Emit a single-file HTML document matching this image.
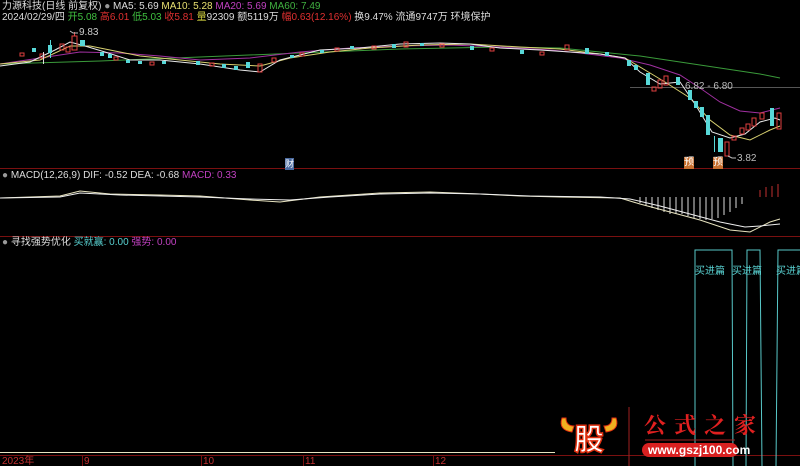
<!DOCTYPE html>
<html><head><meta charset="utf-8"><style>
html,body{margin:0;padding:0;background:#000;width:800px;height:466px;overflow:hidden}
body{position:relative;font-family:"Liberation Sans","Noto Sans CJK SC",sans-serif;font-size:10px;color:#ccc}
.t{position:absolute;white-space:nowrap;line-height:12px}
</style></head><body>
<svg width="800" height="466" style="position:absolute;left:0;top:0">
<line x1="0" y1="168.5" x2="800" y2="168.5" stroke="#7a1010"/>
<line x1="0" y1="236.5" x2="800" y2="236.5" stroke="#7a1010"/>
<line x1="0" y1="455.5" x2="800" y2="455.5" stroke="#7a1010"/>
<line x1="630" y1="87.5" x2="800" y2="87.5" stroke="#555"/>
<polyline fill="none" stroke="#3a9a3a" points="0,64 100,61 200,57 300,53 400,49 500,47 560,48 600,52 640,56 680,62 720,68 760,74 780,78"/>
<polyline fill="none" stroke="#a030a0" points="0,64 40,58 80,52 120,53 160,56 200,60 250,58 300,52 350,48 400,46 450,45 500,47 550,50 580,53 620,58 650,65 680,75 700,88 720,102 740,111 760,113 780,108"/>
<polyline fill="none" stroke="#d8d070" points="0,64 40,60 70,46 90,46 110,50 140,56 180,60 220,64 260,66 290,58 330,52 370,48 420,45 470,44 520,47 560,49 600,54 625,58 645,70 665,82 690,98 710,120 730,135 750,140 770,130 780,126"/>
<polyline fill="none" stroke="#e8e8e8" points="0,66 30,62 55,50 70,42 85,46 105,52 130,60 160,60 200,64 240,70 260,72 280,60 320,50 360,48 400,44 440,43 470,44 500,48 540,50 570,52 600,54 625,58 640,72 660,84 680,82 695,104 712,132 730,138 745,134 760,122 775,118 780,120"/>
<g>
<rect x="72" y="36" width="5" height="14" fill="none" stroke="#e04040"/>
<line x1="74.5" y1="32" x2="74.5" y2="36" stroke="#e04040"/>
<line x1="50.5" y1="40" x2="50.5" y2="58" stroke="#58d8d8"/>
<rect x="48" y="45" width="4" height="8" fill="#58d8d8"/>
<rect x="80" y="40" width="5" height="6" fill="#58d8d8"/>
<rect x="60" y="44" width="4" height="6" fill="none" stroke="#e04040"/>
<rect x="66" y="47" width="4" height="5" fill="none" stroke="#e04040"/>
<rect x="32" y="48" width="4" height="4" fill="#58d8d8"/>
<rect x="20" y="53" width="4" height="3" fill="none" stroke="#e04040"/>
<rect x="40" y="54" width="4" height="4" fill="none" stroke="#e04040"/>
<line x1="43.5" y1="52" x2="43.5" y2="64" stroke="#ddd"/>
<rect x="100" y="52" width="4" height="4" fill="#58d8d8"/>
<rect x="108" y="54" width="4" height="4" fill="#58d8d8"/>
<rect x="114" y="57" width="4" height="3" fill="none" stroke="#e04040"/>
<rect x="126" y="60" width="4" height="3" fill="#58d8d8"/>
<rect x="138" y="61" width="4" height="3" fill="#58d8d8"/>
<rect x="150" y="62" width="4" height="3" fill="none" stroke="#e04040"/>
<rect x="162" y="61" width="4" height="3" fill="#58d8d8"/>
<rect x="196" y="61" width="4" height="4" fill="#58d8d8"/>
<rect x="210" y="63" width="4" height="3" fill="none" stroke="#e04040"/>
<rect x="222" y="64" width="4" height="4" fill="#58d8d8"/>
<rect x="234" y="66" width="4" height="4" fill="#58d8d8"/>
<rect x="246" y="62" width="4" height="6" fill="#58d8d8"/>
<rect x="258" y="64" width="4" height="8" fill="none" stroke="#e04040"/>
<rect x="272" y="58" width="4" height="4" fill="none" stroke="#e04040"/>
<rect x="290" y="55" width="4" height="3" fill="#58d8d8"/>
<rect x="300" y="53" width="4" height="3" fill="none" stroke="#e04040"/>
<rect x="320" y="50" width="4" height="3" fill="#58d8d8"/>
<rect x="335" y="48" width="4" height="3" fill="none" stroke="#e04040"/>
<rect x="350" y="46" width="4" height="3" fill="#58d8d8"/>
<rect x="372" y="46" width="4" height="3" fill="none" stroke="#e04040"/>
<rect x="392" y="44" width="4" height="4" fill="#58d8d8"/>
<rect x="404" y="42" width="4" height="5" fill="none" stroke="#e04040"/>
<rect x="420" y="43" width="4" height="3" fill="#58d8d8"/>
<rect x="440" y="44" width="4" height="3" fill="none" stroke="#e04040"/>
<rect x="470" y="46" width="4" height="4" fill="#58d8d8"/>
<rect x="490" y="48" width="4" height="3" fill="none" stroke="#e04040"/>
<rect x="520" y="50" width="4" height="4" fill="#58d8d8"/>
<rect x="540" y="52" width="4" height="3" fill="none" stroke="#e04040"/>
<rect x="565" y="45" width="4" height="5" fill="none" stroke="#e04040"/>
<rect x="585" y="48" width="4" height="6" fill="#58d8d8"/>
<rect x="605" y="52" width="4" height="4" fill="#58d8d8"/>
<rect x="627" y="60" width="4" height="6" fill="#58d8d8"/>
<rect x="634" y="65" width="4" height="5" fill="#58d8d8"/>
<rect x="646" y="73" width="4" height="12" fill="#58d8d8"/>
<rect x="652" y="87" width="4" height="4" fill="none" stroke="#e04040"/>
<rect x="658" y="80" width="4" height="8" fill="none" stroke="#e04040"/>
<rect x="664" y="76" width="4" height="9" fill="none" stroke="#e04040"/>
<rect x="676" y="77" width="4" height="8" fill="#58d8d8"/>
<rect x="688" y="90" width="4" height="10" fill="#58d8d8"/>
<rect x="694" y="101" width="4" height="7" fill="#58d8d8"/>
<rect x="700" y="107" width="4" height="10" fill="#58d8d8"/>
<rect x="706" y="115" width="4" height="20" fill="#58d8d8"/>
<line x1="714.5" y1="136" x2="714.5" y2="152" stroke="#58d8d8"/>
<rect x="718" y="138" width="5" height="14" fill="#58d8d8"/>
<rect x="725" y="142" width="4" height="14" fill="none" stroke="#e04040"/>
<rect x="732" y="136" width="4" height="4" fill="none" stroke="#e04040"/>
<rect x="740" y="128" width="4" height="6" fill="none" stroke="#e04040"/>
<rect x="746" y="124" width="4" height="6" fill="none" stroke="#e04040"/>
<rect x="752" y="118" width="4" height="8" fill="none" stroke="#e04040"/>
<rect x="760" y="113" width="4" height="6" fill="none" stroke="#e04040"/>
<rect x="770" y="108" width="4" height="18" fill="#58d8d8"/>
<rect x="777" y="113" width="4" height="16" fill="none" stroke="#e04040"/>
</g>
<polyline fill="none" stroke="#bbb" points="70,31 73,33 78,33"/>
<polyline fill="none" stroke="#bbb" points="728,156 732,158 736,158"/>
<g stroke="#ddd">
<line x1="640" y1="197" x2="640" y2="203"/><line x1="646" y1="197" x2="646" y2="206"/><line x1="652" y1="197" x2="652" y2="208"/><line x1="658" y1="197" x2="658" y2="210"/><line x1="664" y1="197" x2="664" y2="212"/><line x1="670" y1="197" x2="670" y2="214"/><line x1="676" y1="197" x2="676" y2="214"/><line x1="682" y1="197" x2="682" y2="214"/><line x1="688" y1="197" x2="688" y2="216"/><line x1="694" y1="197" x2="694" y2="218"/><line x1="700" y1="197" x2="700" y2="219"/><line x1="706" y1="197" x2="706" y2="220"/><line x1="712" y1="197" x2="712" y2="219"/><line x1="718" y1="197" x2="718" y2="218"/><line x1="724" y1="197" x2="724" y2="215"/><line x1="730" y1="197" x2="730" y2="212"/><line x1="736" y1="197" x2="736" y2="208"/><line x1="742" y1="197" x2="742" y2="204"/>
</g>
<g stroke="#c03030"><line x1="760" y1="197" x2="760" y2="190"/><line x1="766" y1="197" x2="766" y2="187"/><line x1="772" y1="197" x2="772" y2="186"/><line x1="778" y1="197" x2="778" y2="184"/></g>
<polyline fill="none" stroke="#e8e4c0" points="0,198 60,196 80,191 110,194 160,195 200,196 250,200 280,202 320,197 380,193 430,192 480,194 520,196 560,197 620,198 640,204 670,212 700,220 730,230 750,232 770,222 780,219"/>
<polyline fill="none" stroke="#eeeeee" points="0,198 60,197 80,193 120,195 200,197 250,199 290,200 330,197 380,194 430,193 480,194 530,196 600,197 630,199 660,206 690,214 720,222 745,227 760,226 780,224"/>
<polyline fill="none" stroke="#58c8c8" points="695,466 695,250 732,250 733,466"/>
<polyline fill="none" stroke="#58c8c8" points="746,466 747,250 760,250 762,466"/>
<polyline fill="none" stroke="#58c8c8" points="776,466 778,250 800,250"/>
<line x1="0" y1="452.5" x2="555" y2="452.5" stroke="#e8e4c0"/>
<line x1="82.5" y1="455" x2="82.5" y2="466" stroke="#7a1010"/>
<line x1="201.5" y1="455" x2="201.5" y2="466" stroke="#7a1010"/>
<line x1="303.5" y1="455" x2="303.5" y2="466" stroke="#7a1010"/>
<line x1="433.5" y1="455" x2="433.5" y2="466" stroke="#7a1010"/>
<line x1="629" y1="407" x2="629" y2="466" stroke="#a02020"/>
<rect x="642" y="443" width="96" height="14" rx="7" fill="#d82020"/>
<line x1="645" y1="440" x2="735" y2="440" stroke="#a02020"/>
<path d="M562,418 Q558,430 572,432 L574,426 Q566,426 566,418 Z" fill="#f0b020" stroke="#e03010"/>
<path d="M616,418 Q620,430 606,432 L604,426 Q612,426 612,418 Z" fill="#f0b020" stroke="#e03010"/>
<text x="574" y="450" font-size="30" font-weight="bold" fill="#fff" stroke="#e03010" stroke-width="1.5" font-family="Noto Sans CJK SC,sans-serif">股</text>
</svg>
<div class="t" style="left:2px;top:1px;color:#ddd">力源科技(日线 前复权) <span style="color:#999">●</span> <span style="color:#ddd">MA5: 5.69</span> <span style="color:#e8e070">MA10: 5.28</span> <span style="color:#c040c0">MA20: 5.69</span> <span style="color:#40b040">MA60: 7.49</span></div>
<div class="t" style="left:2px;top:12px;color:#ddd">2024/02/29/四 <span style="color:#40c040">开5.08</span> <span style="color:#e03030">高6.01</span> <span style="color:#40c040">低5.03</span> <span style="color:#e03030">收5.81</span> <span style="color:#d0d040">量</span>92309 额5119万 <span style="color:#e03030">幅0.63(12.16%)</span> 换9.47% 流通9747万 环境保护</div>
<div class="t" style="left:79px;top:27px;color:#ccc">9.83</div>
<div class="t" style="left:685px;top:81px;color:#bbb">6.82 - 6.80</div>
<div class="t" style="left:737px;top:153px;color:#bbb">3.82</div>
<div class="t" style="left:285px;top:158px;background:#4a6aa0;color:#fff;font-size:9px">财</div>
<div class="t" style="left:684px;top:157px;background:#c87030;color:#fff">预</div>
<div class="t" style="left:713px;top:157px;background:#c87030;color:#fff">预</div>
<div class="t" style="left:2px;top:170px;color:#ddd"><span style="color:#999">●</span> MACD(12,26,9) DIF: -0.52 DEA: -0.68 <span style="color:#c040c0">MACD: 0.33</span></div>
<div class="t" style="left:2px;top:237px;color:#ddd"><span style="color:#999">●</span> 寻找强势优化 <span style="color:#58d0d0">买就赢: 0.00</span> <span style="color:#c040c0">强势: 0.00</span></div>
<div class="t" style="left:695px;top:266px;color:#58d0d0">买进篇</div>
<div class="t" style="left:732px;top:266px;color:#58d0d0">买进篇</div>
<div class="t" style="left:776px;top:266px;color:#58d0d0">买进篇</div>
<div class="t" style="left:2px;top:456px;color:#c03030">2023年</div>
<div class="t" style="left:84px;top:456px;color:#c03030">9</div>
<div class="t" style="left:203px;top:456px;color:#c03030">10</div>
<div class="t" style="left:305px;top:456px;color:#c03030">11</div>
<div class="t" style="left:435px;top:456px;color:#c03030">12</div>
<div class="t" style="left:644px;top:412px;color:#e02020;font-size:22px;font-weight:bold;line-height:26px;letter-spacing:8px;font-family:'Noto Serif CJK SC',serif">公式之家</div>
<div class="t" style="left:648px;top:444px;color:#fff;font-size:12px;font-weight:bold;line-height:12px">www.gszj100.com</div>
</body></html>
